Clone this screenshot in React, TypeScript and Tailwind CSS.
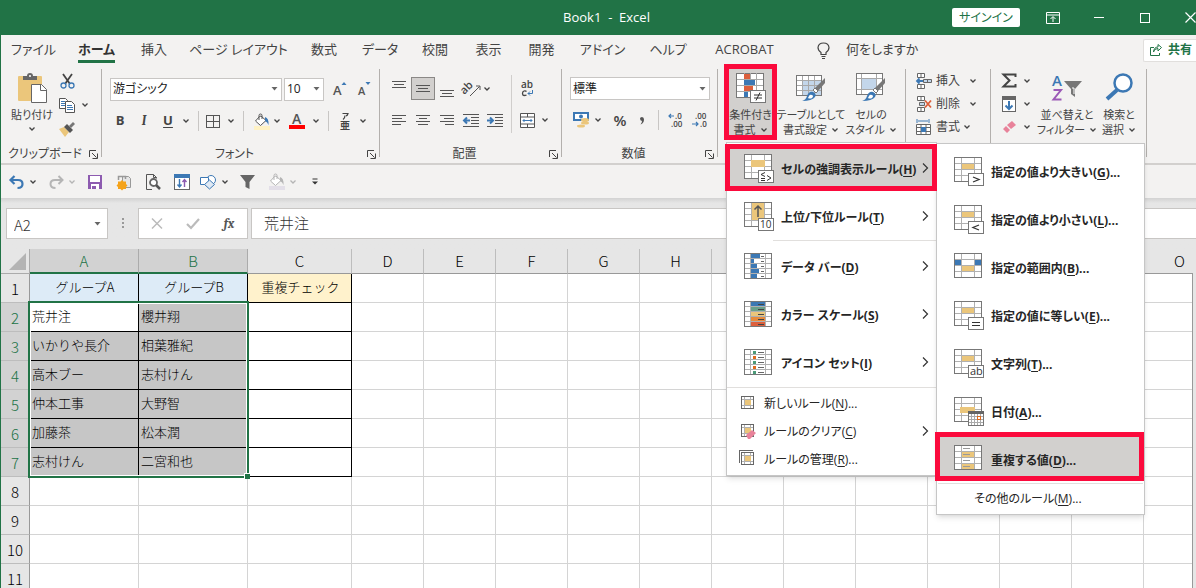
import type { ReactNode } from "react";
import { clsx } from "clsx";

type IconProps = { w: number; h: number; crisp?: boolean; children: ReactNode };

const Icon = ({ w, h, crisp, children }: IconProps) => (
  <svg
    width={w}
    height={h}
    viewBox={`0 0 ${w} ${h}`}
    fill="none"
    className="shrink-0 overflow-visible"
    shapeRendering={crisp ? "crispEdges" : undefined}
    aria-hidden="true"
  >
    {children}
  </svg>
);

const Chevron = ({ color = "#444" }: { color?: string }) => (
  <Icon w={8} h={6}>
    <path d="M1.5 1.5L4 4l2.5-2.5" stroke={color} strokeWidth="1.3" />
  </Icon>
);

const DownArrow = () => (
  <Icon w={7} h={4}>
    <path d="M0.5 0h6L3.5 3.5z" fill="#666" />
  </Icon>
);

type BtnProps = { label: string; className?: string; children: ReactNode };

const Btn = ({ label, className, children }: BtnProps) => (
  <button type="button" aria-label={label} className={clsx("flex shrink-0 items-center justify-center", className)}>
    {children}
  </button>
);

const Drop = ({ label, className, color }: { label: string; className?: string; color?: string }) => (
  <Btn label={label} className={clsx("h-6 w-3", className)}>
    <Chevron color={color} />
  </Btn>
);

const Sep = () => <div className="mx-1.5 h-5 w-px shrink-0 bg-[#c8c6c4]" />;

/* ---------- ribbon icons ---------- */

const Lines = ({ widths, align, top }: { widths: number[]; align: "start" | "middle" | "end"; top: number }) => (
  <Icon w={14} h={16} crisp>
    {widths.map((w, i) => {
      const x = align === "start" ? 0 : align === "middle" ? Math.floor((14 - w) / 2) : 14 - w;
      return <rect key={i} x={x} y={top + i * 3} width={w} height="1" fill="#555" />;
    })}
  </Icon>
);

const Indent = ({ out }: { out?: boolean }) => (
  <Icon w={16} h={14}>
    <path d="M0 1.5h16M8 4.5h8M8 7.5h8M8 10.5h8M0 13.5h16" stroke="#555" shapeRendering="crispEdges" />
    <path d={out ? "M7 7.5H1.5M4 4.5l-3 3 3 3" : "M0 7.5h5.5M3 4.5l3 3-3 3"} stroke="#3c78b4" strokeWidth="2" />
  </Icon>
);

const BucketIcon = ({ muted }: { muted?: boolean }) => (
  <Icon w={18} h={17}>
    <path d="M6.500 3.500L2.500 8l5 4.500L13 7.500 8 3z" fill="#fff" stroke={muted ? "#b5b5b5" : "#555"} />
    <path d="M6 7V2.500Q6 1 7.500 1T9 2.500V6" stroke={muted ? "#b5b5b5" : "#555"} />
    <path d="M12 4q4 1 3.500 8-1-3-3.500-4z" fill={muted ? "#b5b5b5" : "#3c78b4"} />
    <rect x="1" y="13" width="16" height="4" fill={muted ? "#e3dfe8" : "#fff2c4"} />
  </Icon>
);

const BrushTip = () => (
  <>
    <path d="M29 5v5l-7 8-3-3z" fill="#777" />
    <path d="M19 15l3 3-2 2-3-3z" fill="#fff" stroke="#777" />
    <path d="M6 28q4-1 5-5 2-5 6-4 4 2 2 5-3 4-13 4z" fill="#3c78b4" />
    <path d="M13 23q1-2 3-1 2 1 0 3-2 1-4 0z" fill="#fff" />
  </>
);

const PasteIcon = () => (
  <Icon w={30} h={30}>
    <rect x="1" y="3" width="24" height="25" rx="1" fill="#ebc67b" />
    <path d="M6 7V3h4q0-3 3-3t3 3h4v4z" fill="#666" />
    <circle cx="13" cy="3" r="1" fill="#fff" />
    <path d="M14.500 11.500h10l5 5v13h-15z" fill="#fff" stroke="#666" />
    <path d="M23.500 11.500v6h6" stroke="#666" />
  </Icon>
);

const CutIcon = () => (
  <Icon w={15} h={16}>
    <path d="M3 1l7 10M12 1L5 11" stroke="#444" strokeWidth="1.800" />
    <circle cx="3.500" cy="12.500" r="2.500" stroke="#3c78b4" strokeWidth="1.300" />
    <circle cx="11.500" cy="12.500" r="2.500" stroke="#3c78b4" strokeWidth="1.300" />
  </Icon>
);

const CopyIcon = () => (
  <Icon w={16} h={15}>
    <path d="M0.500 0.500h6l2 2v8h-8z" fill="#fff" stroke="#555" />
    <path d="M2 3.500h4M2 5.500h4M2 7.500h4" stroke="#3c78b4" />
    <path d="M6.500 3.500h6l3 3v8h-9z" fill="#fff" stroke="#555" />
    <path d="M8 7.500h5M8 9.500h6M8 11.500h6" stroke="#3c78b4" />
  </Icon>
);

const PainterIcon = () => (
  <Icon w={16} h={16}>
    <path d="M0 8l5-2 5 5-4 5z" fill="#ebc67b" />
    <path d="M5 6l3-3 6 6-3 3z" fill="#555" />
    <path d="M10 5l4-4 2 2-4 4z" fill="#777" />
  </Icon>
);

const CondFormatIcon = () => (
  <Icon w={30} h={30} crisp>
    <rect x="0.500" y="0.500" width="27" height="24" fill="#fff" stroke="#777" />
    <path d="M8 0v24M14 0v24M20 0v24M1 6.500h26M1 12.500h26M1 18.500h26" stroke="#a8a8a8" />
    <path d="M8 1h6v5H8zM8 13h9v5H8z" fill="#dc5f3c" />
    <path d="M8 7h11v5H8zM8 19h4v5H8z" fill="#3c78b4" />
    <rect x="14.500" y="17.500" width="15" height="12" fill="#fff" stroke="#777" />
    <path d="M18 22h8M18 25h8M24 19.500l-4 8" stroke="#333" shapeRendering="auto" />
  </Icon>
);

const TableFormatIcon = () => (
  <Icon w={30} h={30}>
    <g shapeRendering="crispEdges">
      <rect x="0.500" y="2.500" width="25" height="20" fill="#fff" stroke="#777" />
      <rect x="7" y="8" width="18" height="14" fill="#c3d6ea" />
      <path d="M6.500 3v19M12.500 3v19M18.500 3v19M1 7.500h24M1 12.500h24M1 17.500h24" stroke="#a8a8a8" />
    </g>
    <BrushTip />
  </Icon>
);

const CellStyleIcon = () => (
  <Icon w={30} h={30}>
    <g shapeRendering="crispEdges">
      <rect x="0.500" y="0.500" width="26" height="21" fill="#fff" stroke="#777" />
      <path d="M5.500 1v20M20.500 1v20M1 5.500h25M1 16.500h25" stroke="#a8a8a8" />
      <rect x="6" y="6" width="14" height="10" fill="#c3d6ea" />
    </g>
    <BrushTip />
  </Icon>
);

const CellsIcon = ({ kind }: { kind: "insert" | "delete" | "format" }) => (
  <Icon w={16} h={16}>
    {kind === "format" ? (
      <>
        <path d="M1 0v4M13 0v4M2 2h10" stroke="#3c78b4" />
        <path d="M0.500 5.500h14v10H0.500zM5 5.500v10M10 5.500v10M0 8.500h15M0 12.500h15" stroke="#666" fill="#fff" />
        <rect x="5" y="8" width="5" height="5" fill="#3c78b4" />
      </>
    ) : (
      <>
        <path d="M1.500 0.500h7v4h-7zM1.500 11.500h7v4h-7zM5 0.500v4M5 11.500v4" stroke="#666" fill="#fff" />
        {kind === "insert" ? (
          <>
            <path d="M7.500 6.500h8v3h-8zM11.500 6.500v3" stroke="#666" fill="#c3d6ea" />
            <path d="M7 8H1M3.500 5.500L1 8l2.500 2.500" stroke="#3c78b4" strokeWidth="1.800" />
          </>
        ) : (
          <>
            <path d="M3.500 6.500h5v3h-5z" stroke="#666" fill="#c3d6ea" />
            <path d="M9 4.500l6 7M15 4.500l-6 7" stroke="#dc5f3c" strokeWidth="1.800" />
          </>
        )}
      </>
    )}
  </Icon>
);

const LauncherIcon = () => (
  <Icon w={9} h={9}>
    <path d="M0.500 7V0.500H7M3 3l4.500 4.500M8.500 3.500v5h-5" stroke="#444" />
  </Icon>
);

/* ---------- menu icons ---------- */

const SheetIcon = ({ badge, children }: { badge?: ReactNode; children?: ReactNode }) => (
  <Icon w={30} h={29}>
    <g shapeRendering="crispEdges">
      <rect x="0.500" y="0.500" width="27" height="24" fill="#fff" stroke="#777" />
      <path d="M7.500 1v23M20.500 1v23M1 6.500h26M1 12.500h26M1 18.500h26" stroke="#b0b0b0" />
      {children ?? <rect x="8" y="7" width="12" height="5" fill="#ebc67b" />}
      {badge && <rect x="14.500" y="16.500" width="15" height="12" fill="#fff" stroke="#777" />}
    </g>
    {badge}
  </Icon>
);

const RulesIcon = (
  <SheetIcon badge={<path d="M21 18.500l-4 2 4 2M17 24.500h4M17 26.500h4M23 21.500l4 2.500-4 2.500" stroke="#333" />}>
    <rect x="7" y="6" width="14" height="7" fill="#ebc67b" />
  </SheetIcon>
);

const TopIcon = (
  <SheetIcon
    badge={
      <text x="16" y="26" fontSize="10" fontWeight="400" fill="#333">
        10
      </text>
    }
  >
    <rect x="8" y="1" width="12" height="17" fill="#ebc67b" />
    <path d="M14 15V4M10.500 7.500L14 4l3.500 3.500" stroke="#555" strokeWidth="1.500" shapeRendering="auto" />
  </SheetIcon>
);

const FiveRows = ({ children }: { children: ReactNode }) => (
  <Icon w={30} h={26} crisp>
    <rect x="0.500" y="0.500" width="27" height="25" fill="#fff" stroke="#777" />
    <path d="M6.500 1v24M21.500 1v24M1 5.500h26M1 10.500h26M1 15.500h26M1 20.500h26" stroke="#b0b0b0" />
    {children}
  </Icon>
);

const BarsIcon = (
  <FiveRows>
    {[9, 3, 6, 8, 6].map((w, i) => (
      <g key={i}>
        <rect x="7" y={i * 5 + 1} width={w} height="4" fill="#3c78b4" />
        <rect x="17" y={i * 5 + 3} width="3" height="1" fill="#666" />
      </g>
    ))}
  </FiveRows>
);

const ScaleIcon = (
  <FiveRows>
    {["#3c78b4", "#6aa08a", "#ebc67b", "#e88b3c", "#dc5f3c"].map((c, i) => (
      <g key={i}>
        <rect x="7" y={i * 5 + 1} width="14" height="4" fill={c} />
        <rect x="14" y={i * 5 + 3} width="6" height="1" fill="#444" />
      </g>
    ))}
  </FiveRows>
);

const IconSetIcon = (
  <FiveRows>
    {["#4c9a78", "#e06a1c", "#4c9a78", "#e06a1c", "#4c9a78"].map((c, i) => (
      <g key={i}>
        <rect x="9" y={i * 5 + 2} width="3" height="3" fill={c} />
        <rect x="14" y={i * 5 + 3} width="6" height="1" fill="#666" />
      </g>
    ))}
  </FiveRows>
);

const BetweenIcon = (
  <SheetIcon>
    <path d="M1 7h6v5H1zM21 7h6v5h-6z" fill="#3c78b4" />
    <path d="M8 13h12v5H8z" fill="#ebc67b" />
  </SheetIcon>
);

const DateIcon = (
  <SheetIcon
    badge={
      <g shapeRendering="crispEdges">
        <rect x="14" y="14" width="16" height="3" fill="#666" />
        <path d="M17.500 17v11M20.500 17v11M23.500 17v11M26.500 17v11M15 19.500h14M15 22.500h14M15 25.500h14" stroke="#aaa" />
        <rect x="23.500" y="19.500" width="3" height="3" fill="#fff" stroke="#e06a1c" />
      </g>
    }
  >
    <rect x="6" y="10" width="15" height="6" fill="#ebc67b" />
  </SheetIcon>
);

const DuplicateIcon = (
  <SheetIcon>
    <path d="M8 7h12v5H8zM8 19h12v5H8z" fill="#ebc67b" />
    <path d="M9 3.500h7M9 9.500h7M9 15.500h7M9 21.500h7" stroke="#999" />
  </SheetIcon>
);

const SmallRuleIcon = ({ kind }: { kind: "new" | "clear" | "manage" }) => (
  <Icon w={16} h={16}>
    <g shapeRendering="crispEdges">
      <path d="M1.500 1.500h12v12h-12z" fill="#fff" stroke="#666" />
      <path d="M4.500 2v11M10.500 2v11M2 4.500h11M2 10.500h11" stroke="#b0b0b0" />
      <rect x="5" y="5" width="6" height="5" fill="#ebc67b" />
      {kind === "manage" && <path d="M-0.500 12V-0.500H13" stroke="#666" />}
    </g>
    {kind === "clear" && <path d="M6 12l6-5 4 3-6 6h-2z" fill="#e8829a" />}
  </Icon>
);

/* ---------- title bar and tabs ---------- */

const TitleBar = () => (
  <header className="flex h-[35px] shrink-0 items-center bg-[#217346] pl-4 text-white">
    <div className="flex-1" />
    <h1 className="whitespace-pre text-[13px]">Book1  -  Excel</h1>
    <div className="flex h-full flex-1 items-center justify-end">
      <button type="button" className="mr-2.5 flex h-[19px] w-[68px] items-center justify-center rounded-xs bg-white text-xs text-[#217346]">
        サインイン
      </button>
      <Btn label="リボンの表示オプション" className="h-full w-[46px]">
        <Icon w={14} h={12}>
          <path d="M0.500 0.500h13v11H0.500zM0.500 3h13M7 10V5M4.500 7L7 4.500 9.500 7" stroke="#fff" />
        </Icon>
      </Btn>
      <Btn label="最小化" className="h-full w-[46px]">
        <div className="h-px w-2.5 bg-white" />
      </Btn>
      <Btn label="元に戻す(縮小)" className="h-full w-[46px]">
        <div className="size-2.5 border border-white" />
      </Btn>
      <Btn label="閉じる" className="h-full w-7 overflow-hidden pl-4">
        <Icon w={11} h={11}>
          <path d="M0.500 0.500l10 10M10.500 0.500l-10 10" stroke="#fff" strokeWidth="1.200" />
        </Icon>
      </Btn>
    </div>
  </header>
);

const TABS = [
  { name: "ファイル", width: "w-[65px]" },
  { name: "ホーム", width: "w-[61px]", active: true },
  { name: "挿入", width: "w-[54px]" },
  { name: "ページ レイアウト", width: "w-[115px]" },
  { name: "数式", width: "w-14" },
  { name: "データ", width: "w-14" },
  { name: "校閲", width: "w-[54px]" },
  { name: "表示", width: "w-[53px]" },
  { name: "開発", width: "w-[53px]" },
  { name: "アドイン", width: "w-[69px]" },
  { name: "ヘルプ", width: "w-[62px]" },
  { name: "ACROBAT", width: "w-[91px]" },
];

const Tabs = () => (
  <nav className="flex h-[30px] shrink-0 items-center text-[13px]">
    {TABS.map((t) => (
      <button key={t.name} type="button" className={clsx("flex h-full shrink-0 items-center justify-center whitespace-nowrap", t.width)}>
        <span className={clsx("flex h-[26px] items-center border-b-3 pt-0.5", t.active ? "border-[#217346] font-bold text-[#333]" : "border-transparent")}>
          {t.name}
        </span>
      </button>
    ))}
    <button type="button" className="ml-[27px] flex items-center gap-4 whitespace-nowrap">
      <Icon w={13} h={17}>
        <path d="M4 12.500v-2Q1 8.500 1 5.500 1.500 1 6.500 1T12 5.500q0 3-3 5v2zM4.500 14.500h4M5 16.500h3" stroke="#444" strokeWidth="1.200" />
      </Icon>
      何をしますか
    </button>
    <button type="button" className="ml-auto flex h-[23px] w-[53px] shrink-0 items-center gap-1.5 rounded-l-xs border border-r-0 border-[#e1dfdd] bg-white pl-1.5 text-xs font-bold text-[#217346]">
      <Icon w={12} h={12}>
        <path d="M4 3.500H0.500v8h9V9M3.500 8Q4 4.500 8 4.500V7l3.500-3.500L8 0.500V3Q4 3 3.500 8z" stroke="#217346" />
      </Icon>
      共有
    </button>
  </nav>
);

/* ---------- conditional formatting menus ---------- */

type RuleItem = { text: string; hotkey: string; tail?: string; icon?: ReactNode; marked?: boolean; arrow?: boolean };

const TOP_RULES: RuleItem[] = [
  { text: "セルの強調表示ルール", hotkey: "H", icon: RulesIcon, marked: true },
  { text: "上位/下位ルール", hotkey: "T", icon: TopIcon },
];

const VISUAL_RULES: RuleItem[] = [
  { text: "データ バー", hotkey: "D", icon: BarsIcon },
  { text: "カラー スケール", hotkey: "S", icon: ScaleIcon },
  { text: "アイコン セット", hotkey: "I", icon: IconSetIcon },
];

const MANAGE_RULES: RuleItem[] = [
  { text: "新しいルール", hotkey: "N", tail: "...", icon: <SmallRuleIcon kind="new" /> },
  { text: "ルールのクリア", hotkey: "C", icon: <SmallRuleIcon kind="clear" />, arrow: true },
  { text: "ルールの管理", hotkey: "R", tail: "...", icon: <SmallRuleIcon kind="manage" /> },
];

const HIGHLIGHT_RULES: RuleItem[] = [
  { text: "指定の値より大きい", hotkey: "G", icon: <SheetIcon badge={<path d="M19 20l6 2.500-6 2.500" stroke="#333" strokeWidth="1.300" />} /> },
  { text: "指定の値より小さい", hotkey: "L", icon: <SheetIcon badge={<path d="M25 20l-6 2.500 6 2.500" stroke="#333" strokeWidth="1.300" />} /> },
  { text: "指定の範囲内", hotkey: "B", icon: BetweenIcon },
  { text: "指定の値に等しい", hotkey: "E", icon: <SheetIcon badge={<path d="M18 21.500h8M18 24.500h8" stroke="#333" />} /> },
  {
    text: "文字列",
    hotkey: "T",
    icon: (
      <SheetIcon
        badge={
          <text x="16" y="26" fontSize="11" fontWeight="400" fill="#333">
            ab
          </text>
        }
      />
    ),
  },
  { text: "日付", hotkey: "A", icon: DateIcon },
  { text: "重複する値", hotkey: "D", icon: DuplicateIcon, marked: true },
];

const MenuArrow = () => (
  <span className="ml-auto">
    <Icon w={7} h={10}>
      <path d="M1 0.500L5.500 5 1 9.500" stroke="#333" strokeWidth="1.200" />
    </Icon>
  </span>
);

const RuleLabel = ({ text, hotkey, tail, className }: RuleItem & { className?: string }) => (
  <span className={clsx("whitespace-nowrap", className)}>
    {text}(<u className="underline-offset-2">{hotkey}</u>){tail}
  </span>
);

const BigRule = ({ item, arrow, tail }: { item: RuleItem; arrow?: boolean; tail?: string }) => (
  <button type="button" role="menuitem" className="relative flex h-12 w-full items-center pr-[7px] pl-[17px] text-xs font-bold">
    {item.marked && (
      <span
        className={clsx(
          "absolute z-30 border-5 border-[#fb0a3c] bg-[#d2d0ce]",
          arrow ? "-right-px -left-0.5 top-0 bottom-px" : "-top-[3px] right-0 bottom-0.5 -left-0.5",
        )}
      />
    )}
    <span className="relative z-40 flex w-full items-center">
      {item.icon}
      <RuleLabel {...item} tail={tail} className="pt-1 pl-[7px]" />
      {arrow && <MenuArrow />}
    </span>
  </button>
);

const HighlightMenu = () => (
  <div role="menu" className="absolute top-0 left-[209px] z-20 w-[209px] border border-[#c6c6c6] bg-white pt-[3px] shadow-md">
    {HIGHLIGHT_RULES.map((item) => (
      <BigRule key={item.text} item={item} tail="..." />
    ))}
    <div className="mx-px h-px bg-[#e1dfdd]" />
    <button type="button" role="menuitem" className="flex h-[30px] w-full items-center pl-[37px] text-xs">
      <RuleLabel text="その他のルール" hotkey="M" tail="..." />
    </button>
  </div>
);

const CondFormatMenu = () => (
  <div role="menu" className="absolute top-[73px] left-0.5 z-20 w-[211px] border border-[#c6c6c6] bg-white pt-px pb-0.5 text-[#262626] shadow-md">
    {TOP_RULES.map((item) => (
      <BigRule key={item.text} item={item} arrow />
    ))}
    <div className="mb-px ml-[46px] h-px bg-[#e1dfdd]" />
    {VISUAL_RULES.map((item) => (
      <BigRule key={item.text} item={item} arrow />
    ))}
    <div className="my-px h-px bg-[#e1dfdd]" />
    {MANAGE_RULES.map((item) => (
      <button key={item.text} type="button" role="menuitem" className="flex h-7 w-full items-center gap-2 pr-[7px] pl-[13px] text-xs">
        {item.icon}
        <RuleLabel {...item} className="pt-0.5" />
        {item.arrow && <MenuArrow />}
      </button>
    ))}
    <HighlightMenu />
  </div>
);

/* ---------- ribbon ---------- */

const Group = ({ caption, launcher, className, children }: { caption?: string; launcher?: boolean; className: string; children: ReactNode }) => (
  <section className={clsx("flex shrink-0", className)}>
    <div className="flex min-w-0 flex-1 flex-col">
      <div className="flex h-[76px]">{children}</div>
      <div className="flex h-[18px] items-center pr-[3px] text-xs">
        <span className="flex-1 text-center whitespace-nowrap">{caption}</span>
        {launcher && (
          <Btn label={`${caption}の設定`}>
            <LauncherIcon />
          </Btn>
        )}
      </div>
    </div>
    <div className="h-[88px] w-px bg-[#b3b0ad]" />
  </section>
);

const BigButton = ({ icon, lines, className }: { icon: ReactNode; lines: [string, string]; className: string }) => (
  <button type="button" className={clsx("relative flex shrink-0 flex-col items-center gap-1 pt-1 text-[11px] leading-[15px] whitespace-nowrap", className)}>
    {icon}
    <span className="flex flex-col items-center">
      <span>{lines[0]}</span>
      <span className="flex items-center gap-1">
        {lines[1]}
        <Chevron />
      </span>
    </span>
  </button>
);

const Combo = ({ label, value, className }: { label: string; value: string; className: string }) => (
  <label className={clsx("relative flex h-[23px] items-center", className)}>
    <select aria-label={label} className="h-full w-full appearance-none border border-[#c8c6c4] bg-white pl-0.5 text-xs text-[#222]">
      <option>{value}</option>
    </select>
    <span className="pointer-events-none absolute right-1">
      <DownArrow />
    </span>
  </label>
);

const FontGroup = () => (
  <Group caption="フォント" launcher className="w-[278px]">
    <div className="flex flex-col gap-2 pt-2 pl-2">
      <div className="flex items-center">
        <Combo label="フォント名" value="游ゴシック" className="w-[172px]" />
        <Combo label="フォント サイズ" value="10" className="ml-0.5 w-10" />
        <Btn label="フォント サイズの拡大" className="ml-1 h-6 w-6">
          <Icon w={16} h={16}>
            <text x="1" y="14" fontSize="13" fontWeight="600" fill="#555">A</text>
            <path d="M9.500 4L12 1l2.500 3z" fill="#3c78b4" />
          </Icon>
        </Btn>
        <Btn label="フォント サイズの縮小" className="h-6 w-6">
          <Icon w={16} h={16}>
            <text x="2" y="14" fontSize="11" fontWeight="600" fill="#555">A</text>
            <path d="M9.500 1h5L12 4z" fill="#3c78b4" />
          </Icon>
        </Btn>
      </div>
      <div className="flex h-6 items-center text-[13px]">
        <Btn label="太字" className="-ml-0.5 h-6 w-6 font-bold">B</Btn>
        <Btn label="斜体" className="h-6 w-6 font-serif font-bold italic">I</Btn>
        <Btn label="下線" className="h-6 w-6 font-bold underline underline-offset-2">U</Btn>
        <Drop label="下線の種類" />
        <Sep />
        <Btn label="罫線" className="h-6 w-4">
          <Icon w={14} h={13} crisp>
            <path d="M0.500 0.500h13v12H0.500zM7 0.500v12M0.500 6.500h13" stroke="#555" />
          </Icon>
        </Btn>
        <Drop label="罫線の種類" className="ml-1" />
        <Sep />
        <Btn label="塗りつぶしの色" className="h-6 w-6">
          <BucketIcon />
        </Btn>
        <Drop label="塗りつぶしの色の選択" className="-ml-[3px]" />
        <Btn label="フォントの色" className="h-6 w-7">
          <Icon w={16} h={16}>
            <text x="3" y="11" fontSize="14" fontWeight="600" fill="#555">A</text>
            <rect y="12" width="16" height="4" fill="#f00" />
          </Icon>
        </Btn>
        <Drop label="フォントの色の選択" className="-ml-px" />
        <Sep />
        <Btn label="ふりがなの表示/非表示" className="h-6 w-5">
          <Icon w={12} h={18}>
            <path d="M3.500 1.500H9Q8.500 3.500 7 4M6 3.500Q6 6 4 7.500" stroke="#444" strokeWidth="1.200" />
            <text x="1" y="17" fontSize="10" fontWeight="700" fill="#444">亜</text>
          </Icon>
        </Btn>
        <Drop label="ふりがなの設定" className="ml-0.5" />
      </div>
    </div>
  </Group>
);

const AlignGroup = () => (
  <Group caption="配置" launcher className="w-[182px]">
    <div className="flex flex-col gap-2 pt-2 pl-[7px]">
      <div className="flex h-[23px] items-center">
        <Btn label="上揃え" className="h-6 w-6"><Lines widths={[14, 10, 14]} align="middle" top={0} /></Btn>
        <Btn label="上下中央揃え" className="h-[23px] w-6 border border-[#8a8886] bg-[#d2d0ce]"><Lines widths={[14, 10, 14]} align="middle" top={4} /></Btn>
        <Btn label="下揃え" className="h-6 w-6"><Lines widths={[14, 10, 14]} align="middle" top={9} /></Btn>
        <Btn label="方向" className="h-6 w-7">
          <Icon w={18} h={18}>
            <text x="-3" y="9" fontSize="11" fontWeight="600" fill="#444" transform="rotate(-45 6 8)">ab</text>
            <path d="M6 16L15.500 6.500M12 6h4v4" stroke="#555" />
          </Icon>
        </Btn>
        <Drop label="方向の選択" className="-ml-1.5" />
      </div>
      <div className="flex h-6 items-center">
        <Btn label="左揃え" className="h-6 w-6"><Lines widths={[14, 10, 14, 9]} align="start" top={3} /></Btn>
        <Btn label="中央揃え" className="h-6 w-6"><Lines widths={[14, 8, 14, 10]} align="middle" top={3} /></Btn>
        <Btn label="右揃え" className="h-6 w-6"><Lines widths={[14, 10, 14, 9]} align="end" top={3} /></Btn>
        <Btn label="インデントを減らす" className="h-6 w-6"><Indent out /></Btn>
        <Btn label="インデントを増やす" className="h-6 w-6"><Indent /></Btn>
      </div>
    </div>
    <div className="mr-[3px] ml-1 mt-1.5 h-[58px] w-px bg-[#d0cecc]" />
    <div className="flex flex-col gap-2 pt-2">
      <Btn label="折り返して全体を表示する" className="h-[23px] w-6">
        <Icon w={14} h={18}>
          <text x="1" y="8" fontSize="10" fontWeight="600" fill="#444">ab</text>
          <path d="M6.500 11.500Q5.500 10.500 4 11T2.500 13.500 4 15.500t2.500-0.500" stroke="#444" strokeWidth="1.300" />
          <path d="M12.500 10v3.500H8M10 11.500l-2 2 2 2" stroke="#3c78b4" />
        </Icon>
      </Btn>
      <div className="flex">
        <Btn label="セルを結合して中央揃え" className="h-6 w-6">
          <Icon w={15} h={15}>
            <path d="M0.500 0.500h14v14H0.500zM0.500 4h14M0.500 11h14M7.500 0.500V4M7.500 11v3.500" stroke="#555" fill="#fff" />
            <path d="M3 7.500h9M4.500 6L3 7.500 4.500 9M10.500 6L12 7.500 10.500 9" stroke="#3c78b4" />
          </Icon>
        </Btn>
        <Drop label="結合の種類" />
      </div>
    </div>
  </Group>
);

const Decimals = ({ more }: { more?: boolean }) => (
  <Icon w={16} h={16}>
    <text x={more ? 7 : 3} y="7" fontSize="8" fontWeight="600" fill="#444">{more ? ".0" : ".00"}</text>
    <text x={more ? 3 : 8} y="15" fontSize="8" fontWeight="600" fill="#444">{more ? ".00" : ".0"}</text>
    <path d={more ? "M6 4H1M3 2L1 4l2 2" : "M0 12h6M4 10l2 2-2 2"} stroke="#3c78b4" strokeWidth="1.200" />
  </Icon>
);

const NumberGroup = () => (
  <Group caption="数値" launcher className="w-[156px]">
    <div className="flex flex-col gap-2 pt-2 pl-2">
      <Combo label="表示形式" value="標準" className="w-[140px]" />
      <div className="flex h-6 items-center">
        <Btn label="通貨表示形式" className="h-6 w-[22px]">
          <Icon w={17} h={16}>
            <rect width="16" height="9" fill="#3c78b4" />
            <rect x="2" y="2" width="12" height="5" fill="#fff" />
            <circle cx="8" cy="4.500" r="2" fill="#3c78b4" />
            <ellipse cx="12" cy="8" rx="4" ry="2" fill="#ebc67b" />
            <ellipse cx="12" cy="11" rx="4" ry="1.500" fill="#ebc67b" />
            <ellipse cx="8" cy="14" rx="4" ry="1.500" fill="#ebc67b" />
          </Icon>
        </Btn>
        <Drop label="通貨の選択" />
        <Btn label="パーセント スタイル" className="ml-1 h-6 w-6 text-[15px] font-semibold">%</Btn>
        <Btn label="桁区切りスタイル" className="h-6 w-5">
          <Icon w={6} h={9}>
            <path d="M1 2.500Q1 1 3 1t2 2.500Q5 7 1.500 8.500 3 6.500 3 5 1 4.500 1 2.500z" fill="#555" />
          </Icon>
        </Btn>
        <Sep />
        <Btn label="小数点以下の表示桁数を増やす" className="-ml-px h-6 w-6"><Decimals more /></Btn>
        <Btn label="小数点以下の表示桁数を減らす" className="h-6 w-6"><Decimals /></Btn>
      </div>
    </div>
  </Group>
);

const Ribbon = () => (
  <div className="relative z-10 flex h-[100px] shrink-0 border-b-2 border-[#d2d0ce] pt-1">
    <Group caption="クリップボード" launcher className="w-[101px]">
      <div className="flex flex-1 pl-2">
        <button type="button" className="flex w-[46px] flex-col items-center gap-1 pt-1 text-[11px] leading-[15px] whitespace-nowrap">
          <PasteIcon />
          貼り付け
          <Chevron />
        </button>
        <div className="flex flex-col">
          <Btn label="切り取り" className="h-6 w-6"><CutIcon /></Btn>
          <div className="flex">
            <Btn label="コピー" className="h-6 w-6"><CopyIcon /></Btn>
            <Drop label="コピーの種類" />
          </div>
          <Btn label="書式のコピー/貼り付け" className="h-6 w-6"><PainterIcon /></Btn>
        </div>
      </div>
    </Group>
    <FontGroup />
    <AlignGroup />
    <NumberGroup />
    <Group className="w-[188px]">
      <div className="relative ml-1.5 h-[71px] w-[53px]">
        <div className="absolute -top-[5px] right-0 bottom-0 left-0 border-5 border-[#fb0a3c] bg-[#d2d0ce]" />
        <BigButton icon={<CondFormatIcon />} lines={["条件付き", "書式"]} className="w-full" />
        <CondFormatMenu />
      </div>
      <BigButton icon={<TableFormatIcon />} lines={["テーブルとして", "書式設定"]} className="w-[68px]" />
      <BigButton icon={<CellStyleIcon />} lines={["セルの", "スタイル"]} className="w-[52px]" />
    </Group>
    <Group className="w-[85px]">
      <div className="flex flex-col pl-2.5 text-xs">
        {(
          [
            ["insert", "挿入"],
            ["delete", "削除"],
            ["format", "書式"],
          ] as const
        ).map(([kind, name]) => (
          <div key={kind} className="flex h-[23px] items-center">
            <button type="button" className="flex items-center gap-1">
              <CellsIcon kind={kind} />
              {name}
            </button>
            <Drop label={`${name}の種類`} className={kind === "format" ? "ml-px" : "ml-[7px]"} />
          </div>
        ))}
      </div>
    </Group>
    <Group className="w-[156px]">
      <div className="flex flex-col pl-1.5">
        <div className="flex h-[23px] items-center">
          <Btn label="オート SUM" className="h-6 w-6">
            <Icon w={15} h={15}>
              <path d="M13.500 4V1.500h-12l6 6-6 6h12V11" stroke="#444" strokeWidth="2" />
            </Icon>
          </Btn>
          <Drop label="オート SUM の種類" />
        </div>
        <div className="flex h-[23px] items-center">
          <Btn label="フィル" className="h-6 w-6">
            <Icon w={14} h={16}>
              <rect x="0.500" y="0.500" width="13" height="15" fill="#fff" stroke="#666" />
              <rect width="14" height="4" fill="#666" />
              <path d="M7 5v7.500M3.500 9.500L7 13l3.500-3.500" stroke="#3c78b4" strokeWidth="2" />
            </Icon>
          </Btn>
          <Drop label="フィルの種類" />
        </div>
        <div className="flex h-[23px] items-center">
          <Btn label="クリア" className="h-6 w-6">
            <Icon w={13} h={12}>
              <path d="M0 8l3-3 4 4-3 3zM4 4l5-4 4 4-5 4z" fill="#e8829a" />
            </Icon>
          </Btn>
          <Drop label="クリアの種類" />
        </div>
      </div>
      <BigButton
        className="ml-1 w-[60px]"
        lines={["並べ替えと", "フィルター"]}
        icon={
          <Icon w={30} h={30}>
            <text x="0" y="13" fontSize="15" fontWeight="600" fill="#3c78b4">A</text>
            <path d="M1.500 17h7.500L1.500 26.500H9.500" stroke="#9b59b6" strokeWidth="2" />
            <path d="M12 8h18l-7 8v8l-4-3v-5z" fill="#777" />
            <path d="M20 15h2v6" stroke="#fff" />
          </Icon>
        }
      />
      <BigButton
        className="w-[44px]"
        lines={["検索と", "選択"]}
        icon={
          <Icon w={28} h={30}>
            <circle cx="18" cy="10" r="8.500" stroke="#3c78b4" strokeWidth="2.500" fill="#fff" />
            <path d="M12 17L2 26" stroke="#3c78b4" strokeWidth="4" />
          </Icon>
        }
      />
    </Group>
  </div>
);

/* ---------- quick access toolbar ---------- */

const QuickAccess = () => (
  <div className="flex h-[33px] shrink-0 items-center pl-1">
    <Btn label="元に戻す" className="h-6 w-6">
      <Icon w={16} h={14}>
        <path d="M1.500 5H9q4.500 0 4.500 4t-5 4M5.500 1L1.500 5l4 4" stroke="#3c78b4" strokeWidth="2.200" />
      </Icon>
    </Btn>
    <Drop label="元に戻す履歴" className="-ml-0.5" />
    <Btn label="やり直し" className="ml-[5px] h-6 w-6">
      <Icon w={16} h={14}>
        <path d="M14.500 5H7Q2.500 5 2.500 9t5 4M10.500 1l4 4-4 4" stroke="#b5b5b5" strokeWidth="2" />
      </Icon>
    </Btn>
    <Drop label="やり直し履歴" className="-ml-0.5" color="#b5b5b5" />
    <Btn label="上書き保存" className="ml-[5px] h-6 w-6">
      <Icon w={14} h={14} crisp>
        <path d="M0 0h14v14H0z" fill="#8d5bb0" />
        <path d="M2 1h10v6H2zM3 9h8v5H3z" fill="#fff" />
        <path d="M4 11h4v3H4z" fill="#8d5bb0" />
      </Icon>
    </Btn>
    <Btn label="新規作成" className="ml-[5px] h-6 w-6">
      <Icon w={15} h={16}>
        <path d="M5.500 2.500h6l2 2v9h-8z" fill="#e5e5e5" stroke="#999" />
        <path d="M1.500 6V2.500h7V5" stroke="#999" strokeWidth="1.500" />
        <path d="M5 6l1.500 1.500 2.500 0V10l1.500 1.500L9 13v2H6.500L5 16.500 3.500 15H1v-2l-1.500-1.500L1 10V7.500h2.500z" fill="#f5a31a" />
      </Icon>
    </Btn>
    <Btn label="印刷プレビュー" className="ml-[5px] h-6 w-6">
      <Icon w={16} h={16}>
        <path d="M11.500 4.500v-1l-3-3h-7v15H7M8.500 0.500v3h3" stroke="#555" />
        <circle cx="8.500" cy="8.500" r="3.500" fill="#fff" stroke="#666" strokeWidth="1.800" />
        <path d="M11 11l4 4" stroke="#555" strokeWidth="2.500" />
      </Icon>
    </Btn>
    <Btn label="並べ替え" className="ml-[5px] h-6 w-6">
      <Icon w={16} h={16}>
        <rect x="0.500" y="0.500" width="15" height="15" fill="#fff" stroke="#666" />
        <rect width="16" height="4" fill="#3c78b4" />
        <path d="M5.500 5v8M3.500 10.500l2 2.500 2-2.500" stroke="#3c78b4" strokeWidth="1.400" />
        <path d="M10.500 13V5.500M8.500 8l2-2.500 2 2.500" stroke="#8d5bb0" strokeWidth="1.400" />
      </Icon>
    </Btn>
    <Btn label="図形" className="ml-0.5 h-6 w-6">
      <Icon w={17} h={16}>
        <circle cx="11" cy="6" r="4.500" fill="#fff" stroke="#3c78b4" />
        <path d="M0.500 3.500h8v7h-8z" fill="#fff" stroke="#3c78b4" />
        <path d="M9.500 6l5 4.500-5 4.500-5-4.500z" fill="#dfe9f4" stroke="#3c78b4" />
      </Icon>
    </Btn>
    <Drop label="図形の選択" className="-ml-px" />
    <Btn label="フィルター" className="ml-1 h-6 w-6">
      <Icon w={15} h={14}>
        <path d="M0 0h15L9.500 7v7l-4-2V7z" fill="#666" />
      </Icon>
    </Btn>
    <Btn label="塗りつぶし" className="ml-1.5 h-6 w-6">
      <BucketIcon muted />
    </Btn>
    <Drop label="塗りつぶしの選択" className="-ml-0.5" color="#b5b5b5" />
    <Btn label="クイック アクセス ツール バーのユーザー設定" className="ml-2.5 h-6 w-3">
      <Icon w={6} h={7}>
        <path d="M0.500 1h5" stroke="#333" />
        <path d="M0 3.500h6L3 6.500z" fill="#333" />
      </Icon>
    </Btn>
  </div>
);

/* ---------- formula bar ---------- */

const FormulaBar = () => (
  <div className="flex h-[51px] shrink-0 items-start bg-gradient-to-b from-[#d2d2d2] to-[#e6e6e6] to-10% pt-2.5 pl-[5px]">
    <label className="relative flex h-[31px] w-[102px] items-center">
      <input
        aria-label="名前ボックス"
        defaultValue="A2"
        className="h-full w-full border border-[#c8c6c4] bg-white pt-0.5 pl-[7px] text-[15px] font-light text-[#333] [font-family:'Noto_Sans_CJK_JP',sans-serif]"
      />
      <span className="pointer-events-none absolute right-[7px]">
        <DownArrow />
      </span>
    </label>
    <div className="flex h-[31px] w-[30px] items-center justify-center">
      <Icon w={2} h={11} crisp>
        <path d="M0 0h2v2H0zM0 4h2v2H0zM0 8h2v2H0z" fill="#999" />
      </Icon>
    </div>
    <div className="flex h-[31px] w-[110px] items-center justify-around border border-[#c8c6c4] bg-white">
      <Btn label="キャンセル" className="size-6">
        <Icon w={12} h={11}>
          <path d="M1 0.500l10 10M11 0.500l-10 10" stroke="#bbb" strokeWidth="1.500" />
        </Icon>
      </Btn>
      <Btn label="入力" className="size-6">
        <Icon w={14} h={11}>
          <path d="M1 6l4 4 8-9" stroke="#bbb" strokeWidth="2.200" />
        </Icon>
      </Btn>
      <Btn label="関数の挿入" className="size-6 font-serif text-[13px] font-bold text-[#555] italic">
        fx
      </Btn>
    </div>
    <input
      aria-label="数式バー"
      defaultValue="荒井注"
      className="ml-[3px] h-[31px] min-w-0 flex-1 border border-r-0 border-[#c8c6c4] bg-white pb-0.5 pl-3 text-[15px] font-light text-[#333] [font-family:'Noto_Sans_CJK_JP',sans-serif]"
    />
  </div>
);

/* ---------- sheet ---------- */

// columns I to N lie behind the open menus
const COLUMNS = ["A", "B", "C", "D", "E", "F", "G", "H", "", "", "", "", "", "", "O"];

const ROWS = [
  ["グループA", "グループB", "重複チェック"],
  ["荒井注", "櫻井翔"],
  ["いかりや長介", "相葉雅紀"],
  ["高木ブー", "志村けん"],
  ["仲本工事", "大野智"],
  ["加藤茶", "松本潤"],
  ["志村けん", "二宮和也"],
  [],
  [],
  [],
  [],
];

const cellStyle = (row: number, col: number) => {
  if (row > 6 || col > 2) return "border-[#d4d4d4]";
  if (row === 0) return clsx("border-black text-center", col === 2 ? "bg-[#fff2cc]" : "bg-[#ddebf7]");
  if (col === 2 || (row === 1 && col === 0)) return "border-black";
  return "border-black bg-[#c6c6c6]";
};

const Sheet = () => (
  <main className="relative min-h-0 flex-1 overflow-hidden bg-white [font-family:'Noto_Sans_CJK_JP',sans-serif] [font-feature-settings:normal]">
    <table className="w-[1215px] table-fixed border-separate border-spacing-0 text-[13px] leading-5 font-light text-black">
      <colgroup>
        <col className="w-[29px]" />
        <col className="w-[109px]" />
        <col className="w-[109px]" />
        <col className="w-[104px]" />
        {COLUMNS.slice(3).map((_, i) => (
          <col key={i} className="w-[72px]" />
        ))}
      </colgroup>
      <thead>
        <tr className="h-[25px] text-[15px]">
          <td className="border-r border-b border-[#ababab] bg-[#e6e6e6] p-0">
            <div className="flex justify-end pr-[3px]">
              <Icon w={17} h={17}>
                <path d="M17 0v17H0z" fill="#b4b4b4" />
              </Icon>
            </div>
          </td>
          {COLUMNS.map((c, i) => (
            <th
              key={i}
              scope="col"
              className={clsx(
                "border-r p-0 font-light",
                i < 2 ? "border-b-2 border-r-[#ababab] border-b-[#217346] bg-[#d2d2d2] text-[#217346]" : "border-b border-r-[#bdbdbd] border-b-[#999] bg-[#e6e6e6]",
              )}
            >
              {c}
            </th>
          ))}
        </tr>
      </thead>
      <tbody>
        {ROWS.map((row, r) => {
          const selected = r > 0 && r < 7;
          return (
            <tr key={r} className="h-[29px]">
              <th
                scope="row"
                className={clsx(
                  "border-r border-b border-r-[#999] border-b-[#bdbdbd] p-0 pt-0.5 text-[15px] font-light",
                  selected ? "bg-[#d2d2d2] text-[#217346]" : "bg-[#e6e6e6]",
                )}
              >
                {r + 1}
              </th>
              {COLUMNS.map((_, i) => (
                <td key={i} className={clsx("border-r border-b p-0 pb-0.5 pl-0.5 whitespace-nowrap", cellStyle(r, i))}>
                  {row[i]}
                </td>
              ))}
            </tr>
          );
        })}
      </tbody>
    </table>
    {/* selection frame and fill handle */}
    <div className="pointer-events-none absolute top-[52px] left-[27px] h-[177px] w-[221px] border-2 border-[#217346] shadow-[inset_0_0_0_1px_white]">
      <div className="absolute -right-[3px] -bottom-[3px] size-1.5 border-t border-l border-white bg-[#217346]" />
    </div>
    <div className="absolute top-6 right-0 bottom-0 w-1 border-l border-[#999] bg-[#e6e6e6]" />
  </main>
);

export default function App() {
  return (
    <div className="flex h-screen flex-col overflow-hidden border-l border-[#217346] bg-[#f3f2f1] text-[#444] [font-family:'Open_Sans','Noto_Sans_CJK_JP',sans-serif] [font-feature-settings:'palt']">
      <TitleBar />
      <Tabs />
      <Ribbon />
      <QuickAccess />
      <FormulaBar />
      <Sheet />
    </div>
  );
}
